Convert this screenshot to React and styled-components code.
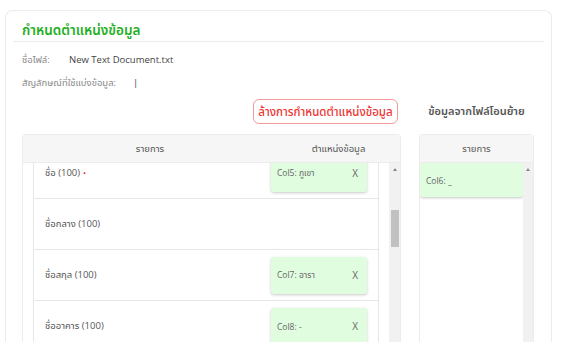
import React from "react";
import styled, { createGlobalStyle } from "styled-components";

const Global = createGlobalStyle`
  html, body { margin: 0; padding: 0; background: #fff; }
  body { font-family: "Open Sans", "Noto Sans Thai", "Noto Sans", sans-serif; color: #555; overflow: hidden; }
  * { box-sizing: border-box; }
`;

const Page = styled.div`
  padding: 10px 10px 0 5px;
  height: 342px;
  overflow: hidden;
`;

const Card = styled.div`
  border: 1px solid #ececec;
  border-bottom: none;
  border-radius: 8px 8px 0 0;
  padding: 0 7px;
  height: 400px;
`;

const Title = styled.h2`
  margin: 0;
  padding: 8px 0 0 9px;
  height: 31px;
  border-bottom: 1px solid #ececec;
  color: #1fb01f;
  font-size: 13.5px;
  font-weight: 600;
  line-height: 22px;
`;

const Content = styled.div`
  padding: 6px 9px 0;
`;

const InfoRow = styled.div`
  display: flex;
  align-items: center;
  height: 23px;
  font-size: 9.5px;
`;

const InfoLabel = styled.span`
  color: #888;
  width: ${(p) => p.$w}px;
  flex: none;
`;

const InfoValue = styled.span`
  color: #444;
`;

const Columns = styled.div`
  display: grid;
  grid-template-columns: 379px 115px;
  column-gap: 18px;
  margin-top: 5px;
`;

const Column = styled.div`
  display: flex;
  flex-direction: column;
`;

const ActionRow = styled.div`
  height: 25px;
  margin-bottom: 10px;
  display: flex;
  align-items: center;
  justify-content: ${(p) => (p.$center ? "center" : "flex-end")};
`;

const ClearButton = styled.button`
  height: 25px;
  width: 145px;
  margin-right: 3px;
  padding: 0 4px;
  border: 1px solid #f59a9a;
  border-radius: 6px;
  background: #fff;
  color: #ee3333;
  font-family: inherit;
  font-size: 11.5px;
  line-height: 1;
  font-weight: 500;
  white-space: nowrap;
`;

const SideHeading = styled.div`
  color: #555;
  font-size: 11px;
  font-weight: 600;
`;

const Table = styled.div`
  border: 1px solid #ececec;
  border-bottom: none;
  border-radius: 4px 4px 0 0;
  display: flex;
  flex-direction: column;
`;

const HeadRow = styled.div`
  display: grid;
  grid-template-columns: ${(p) => p.$cols};
  height: 28px;
  background: #f6f6f6;
  border-bottom: 1px solid #ececec;
  align-items: center;
  font-size: 9.5px;
  color: #555;
`;

const HeadCell = styled.div`
  text-align: center;
`;

const Body = styled.div`
  display: flex;
  height: 200px;
`;

const Viewport = styled.div`
  flex: 1;
  overflow: hidden;
  padding: 0 ${(p) => p.$pad}px;
`;

const List = styled.div`
  margin-top: ${(p) => p.$offset}px;
  border-left: ${(p) => (p.$lined ? "1px solid #e6e6e6" : "none")};
  border-right: ${(p) => (p.$lined ? "1px solid #e6e6e6" : "none")};
`;

const Row = styled.div`
  height: 51px;
  border-bottom: 1px solid #e6e6e6;
  display: flex;
  align-items: center;
  justify-content: space-between;
  padding: 0 11px 0 11px;
`;

const Label = styled.span`
  font-size: 9.5px;
  color: #555;
`;

const Required = styled.span`
  color: #e22;
  margin-left: 3px;
  font-size: 8px;
`;

const Chip = styled.div`
  width: ${(p) => p.$w};
  height: ${(p) => p.$h}px;
  background: #e0fde0;
  border-radius: 3px;
  box-shadow: 0 1px 3px rgba(0, 0, 0, 0.22);
  display: flex;
  align-items: center;
  justify-content: space-between;
  padding: 0 9px 0 6px;
  font-size: 8.5px;
  color: #666;
`;

const ChipClose = styled.span`
  font-size: 10px;
  color: #666;
`;

const Scrollbar = styled.div`
  width: ${(p) => p.$w}px;
  background: #f1f1f1;
  position: relative;
  flex: none;
`;

const ArrowUp = styled.div`
  position: absolute;
  top: 5px;
  left: 50%;
  margin-left: -2px;
  width: 0;
  height: 0;
  border-left: 2px solid transparent;
  border-right: 2px solid transparent;
  border-bottom: 3px solid #888;
`;

const Thumb = styled.div`
  position: absolute;
  top: ${(p) => p.$top}px;
  left: 2px;
  right: 1px;
  height: ${(p) => p.$h}px;
  background: #c1c1c1;
`;

const rows = [
  { label: "ชื่อ (100)", required: true, chip: "Col5: ภูเขา" },
  { label: "ชื่อกลาง (100)" },
  { label: "ชื่อสกุล (100)", chip: "Col7: อารา" },
  { label: "ชื่ออาคาร (100)", chip: "Col8: -" },
];

export default function App() {
  return (
    <>
      <Global />
      <Page>
        <Card>
          <Title>กำหนดตำแหน่งข้อมูล</Title>
          <Content>
            <InfoRow>
              <InfoLabel $w={47}>ชื่อไฟล์:</InfoLabel>
              <InfoValue>New Text Document.txt</InfoValue>
            </InfoRow>
            <InfoRow>
              <InfoLabel $w={111}>สัญลักษณ์ที่ใช้แบ่งข้อมูล:</InfoLabel>
              <InfoValue>|</InfoValue>
            </InfoRow>
            <Columns>
              <Column>
                <ActionRow>
                  <ClearButton>ล้างการกำหนดตำแหน่งข้อมูล</ClearButton>
                </ActionRow>
                <Table>
                  <HeadRow $cols="254px 1fr">
                    <HeadCell>รายการ</HeadCell>
                    <HeadCell>ตำแหน่งข้อมูล</HeadCell>
                  </HeadRow>
                  <Body>
                    <Viewport $pad={10}>
                      <List $offset={-15} $lined>
                        {rows.map((r) => (
                          <Row key={r.label}>
                            <Label>
                              {r.label}
                              {r.required && <Required>•</Required>}
                            </Label>
                            {r.chip && (
                              <Chip $w="96px" $h={37}>
                                <span>{r.chip}</span>
                                <ChipClose>X</ChipClose>
                              </Chip>
                            )}
                          </Row>
                        ))}
                      </List>
                    </Viewport>
                    <Scrollbar $w={11}>
                      <ArrowUp />
                      <Thumb $top={47} $h={37} />
                    </Scrollbar>
                  </Body>
                </Table>
              </Column>
              <Column>
                <ActionRow $center>
                  <SideHeading>ข้อมูลจากไฟล์โอนย้าย</SideHeading>
                </ActionRow>
                <Table>
                  <HeadRow $cols="1fr">
                    <HeadCell>รายการ</HeadCell>
                  </HeadRow>
                  <Body>
                    <Viewport $pad={0}>
                      <List $offset={0}>
                        <Chip $w="100%" $h={34}>
                          <span>Col6: _</span>
                        </Chip>
                      </List>
                    </Viewport>
                    <Scrollbar $w={10}>
                      <ArrowUp />
                    </Scrollbar>
                  </Body>
                </Table>
              </Column>
            </Columns>
          </Content>
        </Card>
      </Page>
    </>
  );
}
